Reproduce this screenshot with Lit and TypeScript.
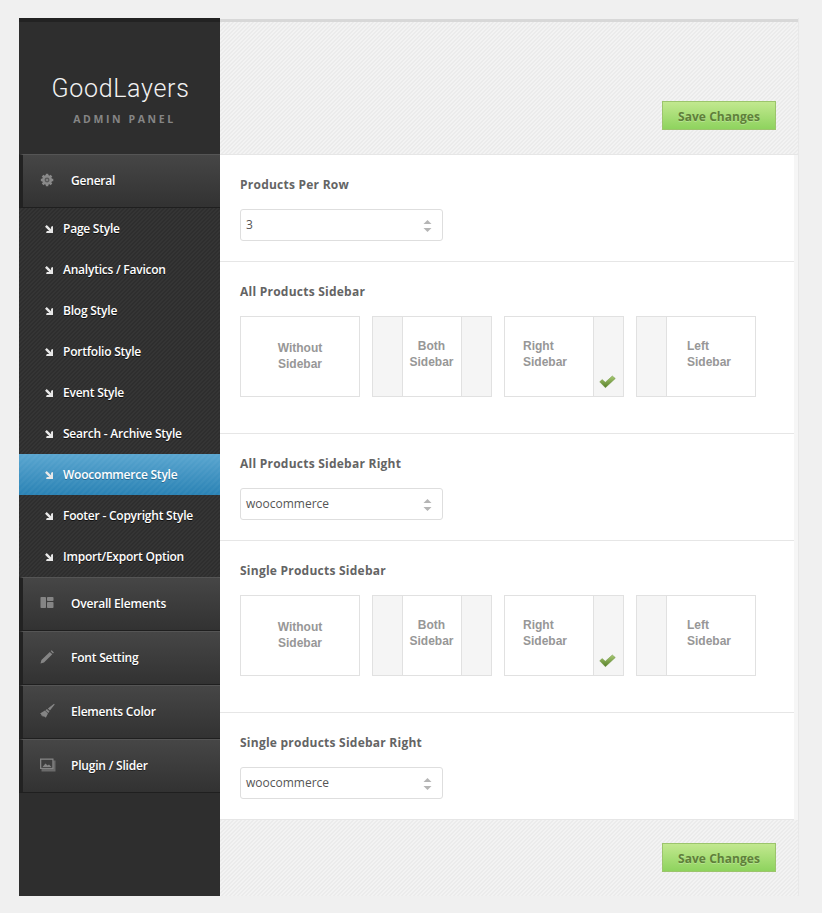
import { LitElement, html, css, svg } from "lit";
import { customElement } from "lit/decorators.js";

const gear = svg`<svg class="mi" width="17" height="16" viewBox="-1 -1 19 18"><g fill="#8a8a8a"><circle cx="8" cy="8" r="5.600"/><rect x="6.600" y="1" width="2.800" height="14"/><rect x="6.600" y="1" width="2.800" height="14" transform="rotate(45 8 8)"/><rect x="6.600" y="1" width="2.800" height="14" transform="rotate(90 8 8)"/><rect x="6.600" y="1" width="2.800" height="14" transform="rotate(135 8 8)"/></g><circle cx="8" cy="8" r="2.800" fill="#5a5a5a"/><circle cx="8" cy="8" r="1.200" fill="#8a8a8a"/></svg>`;
const layout = svg`<svg class="mi" width="17" height="16" viewBox="0 0 17 16"><g fill="#858585"><rect x="1.500" y="2" width="5.500" height="11" rx=".8"/><rect x="8" y="2" width="6.500" height="4" rx=".8"/><rect x="8" y="7" width="6.500" height="6" rx=".8"/></g></svg>`;
const pencil = svg`<svg class="mi" width="17" height="16" viewBox="0 0 17 16"><path fill="#858585" d="M1.500 14.500 2.400 11 10.800 2.900 13.300 5.300 5 13.600ZM11.600 2.100 12.700 1.200 14.900 3.400 14 4.500Z"/></svg>`;
const brush = svg`<svg class="mi" width="17" height="16" viewBox="0 0 17 16"><path fill="#858585" d="M15 .8 15.700 1.500 10.900 7.400 8.900 5.400ZM8 5.900 10.500 8.400 9.300 10 6.400 7.200ZM5.900 7.400 9 10.600 6.800 14.800 5.600 13.400 4.900 14 4.300 12.900 3.200 13.500 3.200 12.300 1.800 12.500 2.300 11.300 1 10.600Z"/></svg>`;
const screen = svg`<svg class="mi" width="17" height="16" viewBox="0 0 17 16"><rect x="2.500" y="3.500" width="14" height="11" fill="#6a6a6a"/><rect x="1" y="1.500" width="13.500" height="10.500" fill="#858585"/><rect x="2.300" y="2.800" width="11" height="8" fill="#3e3e3e"/><path fill="#858585" d="M3.500 10 6.500 6.500 8.500 8.500 10 7.500 12.500 10Z"/></svg>`;
const arrow = svg`<svg class="arrow" width="8" height="8" viewBox="0 0 9 9"><path fill="#e8e8e8" d="M2 0 6.800 4.800V2L9 1.200V9H1.200L2 6.800H4.800L0 2Z"/></svg>`;
const check = svg`<svg class="check" width="17" height="14" viewBox="0 0 17 14"><defs><linearGradient id="cg" x1="0" y1="0" x2="0" y2="1"><stop offset="0" stop-color="#a9ca74"/><stop offset="1" stop-color="#577f28"/></linearGradient></defs><path fill="url(#cg)" stroke="#6f9440" stroke-width=".5" d="M.7 6.800 3.200 4.600 6.300 7.300 13.300 1 16.300 3.500 6.400 12.700Z"/></svg>`;

const subs = ["Page Style", "Analytics / Favicon", "Blog Style", "Portfolio Style", "Event Style", "Search - Archive Style", "Woocommerce Style", "Footer - Copyright Style", "Import/Export Option"];
const mains = [
  [layout, "Overall Elements"],
  [pencil, "Font Setting"],
  [brush, "Elements Color"],
  [screen, "Plugin / Slider"],
] as const;

@customElement("app-root")
export class AppRoot extends LitElement {
  static styles = css`
    :host { display: block; background: #f0f0f0; height: 913px; font-family: "Open Sans", sans-serif; overflow: hidden; }
    .shell { display: flex; margin: 0 23px 0 19px; padding-top: 18px; height: 878px; }
    .side { width: 201px; flex: none; background: #2e2e2e; border-top: 4px solid #222; box-sizing: border-box; display: flex; flex-direction: column; }
    .logo { height: 132px; flex: none; box-sizing: border-box; padding-top: 52px; text-align: center; color: #f2f2f2; }
    .logo h1 { margin: 0; font: 300 25px/30px Roboto, sans-serif; letter-spacing: 0.7px; padding-left: 2px; }
    .logo p { margin: 8px 0 0; font: 700 10.500px/14px "Open Sans", sans-serif; letter-spacing: 2.600px; color: #858585; padding-left: 10px; }
    .main { height: 54px; box-sizing: border-box; flex: none; border-left: 4px solid #222; border-top: 1px solid #555; border-bottom: 1px solid #1f1f1f; background: linear-gradient(#464646, #323232); display: flex; align-items: center; color: #fff; font-size: 12px; font-weight: 600; letter-spacing: -0.2px; padding-left: 16px; padding-bottom: 2px; text-shadow: 0 1px 0 #222; }
    .mi { width: 17px; flex: none; margin-right: 15px; }
    .subs { flex: none; background: linear-gradient(135deg, #2e2e2e 25%, #353535 25%, #353535 50%, #2e2e2e 50%, #2e2e2e 75%, #353535 75%) 0 0 / 4px 4px; }
    .sub { height: 41px; display: flex; align-items: center; padding-left: 26px; color: #fff; font-size: 12px; font-weight: 600; letter-spacing: -0.23px; text-shadow: 0 1px 0 #111; }
    .sub .arrow { margin-right: 10px; flex: none; }
    .sub.on { background: linear-gradient(135deg, rgba(255,255,255,.03) 25%, rgba(255,255,255,0) 25%, rgba(255,255,255,0) 50%, rgba(255,255,255,.03) 50%, rgba(255,255,255,.03) 75%, rgba(255,255,255,0) 75%) 0 0 / 6px 6px, linear-gradient(#5aa6d0, #2a82b4); text-shadow: 0 1px 0 #2a6a90; }
    .content { width: 579px; flex: none; display: flex; flex-direction: column; box-sizing: border-box; padding-top: 1px; border-right: 1px solid #e8e8e8; }
    .bar { background: linear-gradient(135deg, #ebebeb 25%, #f3f3f3 25%, #f3f3f3 50%, #ebebeb 50%, #ebebeb 75%, #f3f3f3 75%) 0 0 / 4px 4px; display: flex; justify-content: flex-end; flex: none; box-sizing: border-box; padding-right: 22px; }
    .top { height: 136px; border-top: 3px solid #d8d8d8; padding-top: 79px; border-bottom: 1px solid #e6e6e6; }
    .bottom { flex: 1; padding-top: 23px; }
    .btn { width: 114px; height: 29px; box-sizing: border-box; border: 1px solid #9cc56c; background: linear-gradient(#c2e88f, #8ed35e); color: #5f7f3a; font: 700 12px/29px "Open Sans", sans-serif; text-align: center; letter-spacing: 0.05px; text-shadow: 0 1px 0 rgba(255,255,255,.25); }
    .body { flex: none; background: #f6f6f6; display: flex; flex-direction: column; }
    .sec { background: #fff; border-bottom: 1px solid #e6e6e6; box-sizing: border-box; padding: 21px 20px 0; margin-right: 4px; box-shadow: 4px 0 0 #f6f6f6; }
    .h1 { height: 107px; }
    .h2 { height: 172px; }
    .lab { font-size: 12px; font-weight: 700; color: #646464; line-height: 17px; height: 17px; margin-bottom: 16px; letter-spacing: 0.24px; }
    .sel { width: 203px; height: 32px; box-sizing: border-box; border: 1px solid #dedede; border-radius: 3px; font-size: 12px; color: #555; line-height: 30px; padding-left: 5px; position: relative; }
    .sel svg { position: absolute; right: 10px; top: 10px; }
    .imgs { display: flex; gap: 12px; }
    .im { width: 120px; height: 81px; box-sizing: border-box; border: 1px solid #e1e1e1; background: #fff; display: flex; font: 700 12px/16px "Liberation Sans", Arial, sans-serif; color: #979797; }
    .pane { width: 29px; background: #f5f5f5; flex: none; position: relative; }
    .pane.l { border-right: 1px solid #e1e1e1; }
    .pane.r { border-left: 1px solid #e1e1e1; }
    .mid { flex: 1; text-align: center; padding-top: 21px; }
    .mid.no { padding-top: 23px; }
    .mid.c { padding-right: 1px; }
    .mid.a { text-align: left; padding-left: 18px; }
    .mid.b { text-align: left; padding-left: 20px; }
    .check { position: absolute; left: 5px; bottom: 7px; }
  `;

  private sel(v: string) {
    return html`<div class="sel">${v}<svg width="9" height="12" viewBox="0 0 9 12"><path fill="#b5b5b5" d="M4.500 0 8.500 4H.5ZM.5 8H8.500L4.500 12Z"/></svg></div>`;
  }

  private imgs() {
    return html`<div class="imgs">
      <div class="im"><div class="mid no">Without<br />Sidebar</div></div>
      <div class="im"><div class="pane l"></div><div class="mid c">Both<br />Sidebar</div><div class="pane r"></div></div>
      <div class="im"><div class="mid a">Right<br />Sidebar</div><div class="pane r">${check}</div></div>
      <div class="im"><div class="pane l"></div><div class="mid b">Left<br />Sidebar</div></div>
    </div>`;
  }

  render() {
    return html`<div class="shell">
      <aside class="side">
        <div class="logo"><h1>GoodLayers</h1><p>ADMIN PANEL</p></div>
        <div class="main">${gear}General</div>
        <div class="subs">
          ${subs.map((s) => html`<div class="sub ${s === "Woocommerce Style" ? "on" : ""}">${arrow}${s}</div>`)}
        </div>
        ${mains.map(([i, t]) => html`<div class="main">${i}${t}</div>`)}
      </aside>
      <main class="content">
        <div class="bar top"><div class="btn">Save Changes</div></div>
        <div class="body">
          <section class="sec h1"><div class="lab">Products Per Row</div>${this.sel("3")}</section>
          <section class="sec h2"><div class="lab">All Products Sidebar</div>${this.imgs()}</section>
          <section class="sec h1"><div class="lab">All Products Sidebar Right</div>${this.sel("woocommerce")}</section>
          <section class="sec h2"><div class="lab">Single Products Sidebar</div>${this.imgs()}</section>
          <section class="sec h1"><div class="lab">Single products Sidebar Right</div>${this.sel("woocommerce")}</section>
        </div>
        <div class="bar bottom"><div class="btn">Save Changes</div></div>
      </main>
    </div>`;
  }
}
